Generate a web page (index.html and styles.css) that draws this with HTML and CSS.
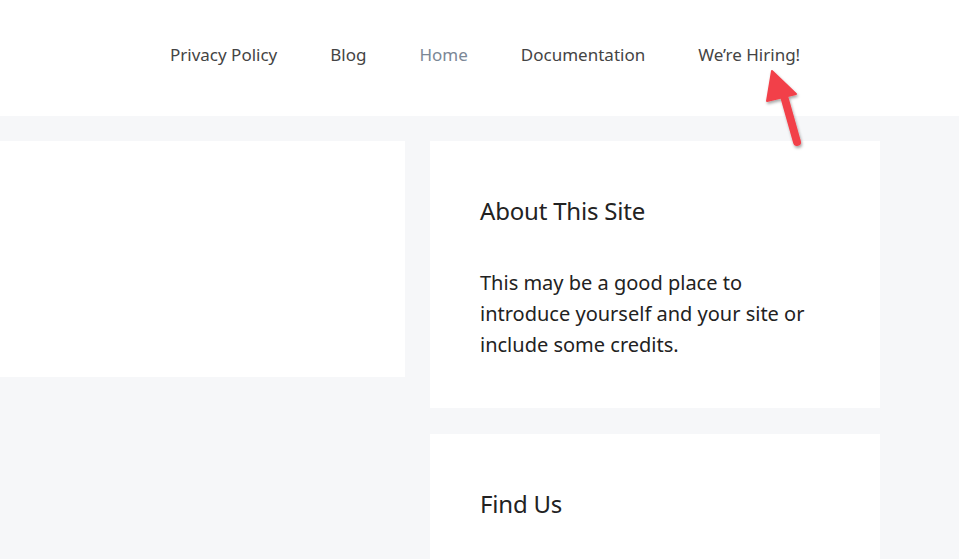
FILE: index.html
```html
<!DOCTYPE html>
<html lang="en">
<head>
<meta charset="utf-8">
<link rel="stylesheet" href="styles.css">
</head>
<body>
<header class="site-header">
  <nav class="main-nav">
    <a class="nav-link" href="#">Privacy Policy</a>
    <a class="nav-link" href="#">Blog</a>
    <a class="nav-link nav-current" href="#">Home</a>
    <a class="nav-link" href="#">Documentation</a>
    <a class="nav-link" href="#">We’re Hiring!</a>
  </nav>
</header>
<main class="site-main">
  <div class="content-card"></div>
  <aside class="sidebar">
    <section class="widget">
      <h2 class="widget-title">About This Site</h2>
      <p class="widget-text">This may be a good place to introduce yourself and your site or include some credits.</p>
    </section>
    <section class="widget">
      <h2 class="widget-title">Find Us</h2>
    </section>
  </aside>
</main>
<svg class="annotation-arrow" width="60" height="100" viewBox="0 0 60 100">
  <defs>
    <filter id="sh" x="-50%" y="-50%" width="200%" height="200%">
      <feDropShadow dx="1" dy="2" stdDeviation="1.5" flood-color="#000" flood-opacity="0.35"/>
    </filter>
  </defs>
  <g filter="url(#sh)">
    <line x1="45" y1="80" x2="32" y2="34" stroke="#f2414a" stroke-width="8" stroke-linecap="round"/>
    <polygon points="20,9 15,39 44,32" fill="#f2414a" stroke="#f2414a" stroke-width="2" stroke-linejoin="round"/>
  </g>
</svg>
</body>
</html>
```

FILE: styles.css
```css
html, body {
  margin: 0;
  padding: 0;
}
body {
  font-family: "Noto Sans", "Open Sans", sans-serif;
  background: #f6f7f9;
  color: #222;
  position: relative;
  height: 559px;
  overflow: hidden;
}
.site-header {
  background: #fff;
  height: 116px;
  display: flex;
  align-items: flex-start;
}
.main-nav {
  display: flex;
  gap: 53px;
  padding-left: 170px;
  padding-top: 42px;
}
.nav-link {
  font-size: 17px;
  line-height: 26px;
  color: #444;
  text-decoration: none;
}
.nav-current {
  color: #7b8796;
}
.site-main {
  display: grid;
  grid-template-columns: 405px 450px;
  column-gap: 25px;
  padding-top: 25px;
  align-items: start;
}
.content-card {
  background: #fff;
  height: 236px;
}
.sidebar {
  display: flex;
  flex-direction: column;
  gap: 26px;
}
.widget {
  background: #fff;
  padding: 53px 50px 48px;
}
.widget-title {
  margin: 0;
  font-size: 24px;
  font-weight: 400;
  line-height: 34px;
  color: #222;
  letter-spacing: -0.2px;
}
.widget-text {
  margin: 39px 0 0;
  font-size: 20px;
  line-height: 31px;
  color: #222;
}
.annotation-arrow {
  position: absolute;
  left: 752px;
  top: 62px;
}
```
